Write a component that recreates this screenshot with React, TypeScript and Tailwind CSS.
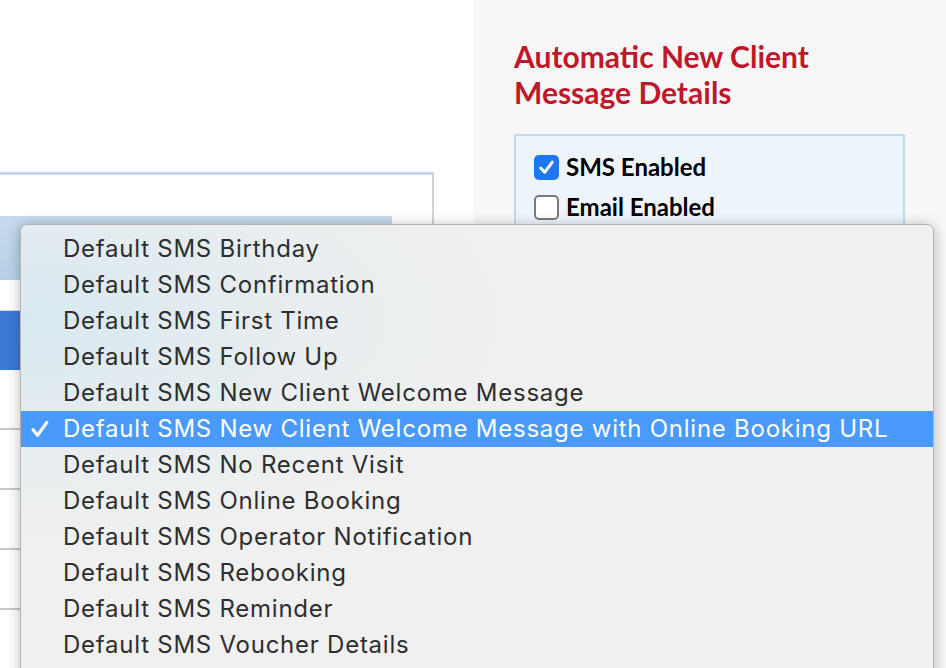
import { Fragment } from 'react';

const templates = [
  'Default SMS Birthday',
  'Default SMS Confirmation',
  'Default SMS First Time',
  'Default SMS Follow Up',
  'Default SMS New Client Welcome Message',
  'Default SMS New Client Welcome Message with Online Booking URL',
  'Default SMS No Recent Visit',
  'Default SMS Online Booking',
  'Default SMS Operator Notification',
  'Default SMS Rebooking',
  'Default SMS Reminder',
  'Default SMS Voucher Details',
];

const selected = 'Default SMS New Client Welcome Message with Online Booking URL';

function CheckRow({ label, checked }: { label: string; checked: boolean }) {
  return (
    <div className="flex items-center gap-[7px] h-[40px]">
      {checked ? (
        <span className="w-[25px] h-[25px] rounded-[5px] bg-[#1d77f2] flex items-center justify-center">
          <svg width="17" height="17" viewBox="0 0 16 16">
            <path d="M2.5 8.5 L6.3 12.5 L13.5 3" fill="none" stroke="white" strokeWidth="2.8" strokeLinecap="round" strokeLinejoin="round" />
          </svg>
        </span>
      ) : (
        <span className="w-[25px] h-[25px] rounded-[5px] bg-white border-2 border-[#7a7a7a]" />
      )}
      <span className="text-[24px] font-bold text-black leading-none">{label}</span>
    </div>
  );
}

export default function App() {
  return (
    <div className="relative w-[946px] h-[668px] overflow-hidden flex bg-white" style={{ fontFamily: 'Lato, "Liberation Sans", sans-serif' }}>
      {/* left: templates list behind the popup */}
      <div className="w-[474px] bg-white pt-[172px]">
        <div className="w-[434px] border-t-[3px] border-[#c2d9ed] border-r-2 border-r-[#d2d2d2] h-[600px]">
          <div className="h-[41px]" />
          <div className="w-[392px] h-[64px] bg-gradient-to-b from-[#c6dbee] to-[#b8d0e6]" />
          <div className="h-[31px] border-b border-[#dcdcdc]" />
          <div className="h-[59px] bg-[#3a7bd6]" />
          {[0, 1, 2, 3, 4].map((i) => (
            <div key={i} className="h-[60px] border-b-2 border-[#c9c9c9]" />
          ))}
        </div>
      </div>

      {/* right: details panel */}
      <div className="flex-1 bg-[#f7f7f7] pl-[40px] pt-[38px]">
        <h2 className="text-[30px] leading-[36px] font-bold text-[#c0172b]">
          Automatic New Client
          <br />
          Message Details
        </h2>
        <div className="mt-[24px] w-[391px] border-2 border-[#c3daed] bg-[#edf4fc] pl-[18px] pt-[11px] pb-[20px]">
          <CheckRow label="SMS Enabled" checked />
          <CheckRow label="Email Enabled" checked={false} />
        </div>
      </div>

      {/* native select popup */}
      <div
        className="absolute left-[20px] top-[224px] w-[914px] h-[520px] rounded-t-[7px] border border-[#b4b4b4] bg-[#f0f0f0] bg-[radial-gradient(ellipse_520px_240px_at_0%_18%,#d9e8f0,#e9eef0_60%,#f0f0f0)] shadow-[0_2px_14px_rgba(0,0,0,0.28)] pt-[6px]"
        style={{ fontFamily: 'Inter, "Liberation Sans", Arial, sans-serif' }}
      >
        {templates.map((t) => (
          <Fragment key={t}>
            {t === selected ? (
              <div className="relative h-[36px] bg-[#4a9afd] text-white flex items-center pl-[42px] text-[24px] tracking-[0.75px]">
                <svg className="absolute left-[10px] top-[9px]" width="18" height="18" viewBox="0 0 16 16">
                  <path d="M1.8 8.6 L5.8 13.6 L14 2.2" fill="none" stroke="white" strokeWidth="2.8" strokeLinecap="round" strokeLinejoin="round" />
                </svg>
                {t}
              </div>
            ) : (
              <div className="h-[36px] text-[#2e2e2e] flex items-center pl-[42px] text-[24px] tracking-[0.75px]">{t}</div>
            )}
          </Fragment>
        ))}
      </div>
    </div>
  );
}
